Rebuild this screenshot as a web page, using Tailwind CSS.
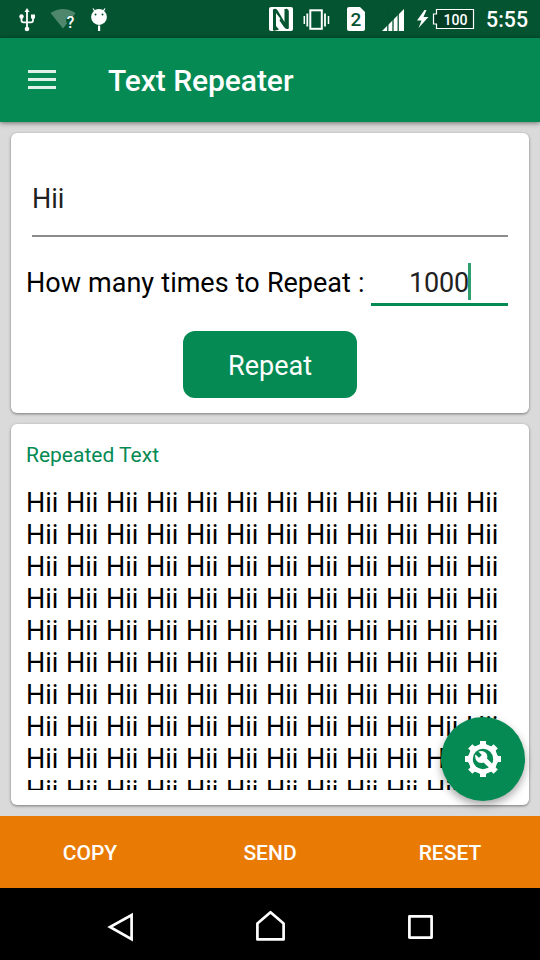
<!DOCTYPE html>
<html lang="en">
<head>
<meta charset="utf-8">
<title>Text Repeater</title>
<script src="https://cdn.jsdelivr.net/npm/@tailwindcss/browser@4"></script>
</head>
<body class="w-[540px] h-[960px] overflow-hidden bg-[#dadada] font-[Roboto,sans-serif] text-black flex flex-col">
<div class="h-[38px] shrink-0 bg-[#045331] text-white">
  <svg width="540" height="38" viewBox="0 0 540 38" fill="none">
    <g stroke="#fff" stroke-width="1.8">
      <path d="M27 12V29M21.500 17v3.500q0 1.800 2 1.800h7.500q2 0 2-1.800V17"/>
    </g>
    <g fill="#fff">
      <path d="M27 8l2.500 4h-5z"/><circle cx="27" cy="29" r="2.300"/><circle cx="21.500" cy="16.500" r="2.200"/><rect x="31" y="14.500" width="4" height="4"/>
    </g>
    <path d="M50.500 13Q63 5 75.500 13L73 16.500Q67 14 66 20L67 23.500L63 28.500Z" fill="#4f876d"/>
    <text x="66.500" y="27.500" font-size="16" font-weight="500" fill="#fff">?</text>
    <g fill="#fff">
      <circle cx="99" cy="17" r="7.900"/><rect x="98" y="25.500" width="2.200" height="5.500"/>
    </g>
    <path d="M93 8.500l2 3M105 8.500l-2 3" stroke="#fff" stroke-width="1.300"/>
    <circle cx="95.500" cy="14.500" r="1" fill="#045331"/><circle cx="102.500" cy="14.500" r="1" fill="#045331"/>
    <rect x="269" y="7" width="24" height="24" rx="2" fill="#fff"/>
    <path d="M273 30.500V9.500Q276 7.500 278 11L284.500 22V9H286.500V26.500L276 13V26L279 29.500Q276 31 273 30.500Z" fill="#045331"/>
    <path d="M286 8.500Q288.500 9 288.800 11V28.500Q286 30 284 27L279.500 20.500L280.500 18.500L286 25Z" fill="#045331"/>
    <rect x="310.300" y="10.300" width="11.500" height="18.500" stroke="#fff" stroke-width="2"/>
    <path d="M307.300 13.500v13M325 13.500v13" stroke="#fff" stroke-width="1.800"/><path d="M304.300 16v8M328.500 16v8" stroke="#fff" stroke-width="1.500"/>
    <path d="M349 7h11l5 5v17q0 2-2 2h-14q-2 0-2-2V9q0-2 2-2z" fill="#fff"/>
    <text x="356" y="26" text-anchor="middle" font-size="19" font-weight="500" fill="#045331">2</text>
    <path d="M382 31L404 9V31Z" fill="#fff"/>
    <path d="M387.800 8v23M393 8v23M398.200 8v23" stroke="#045331" stroke-width="1.300"/>
    <path d="M424.500 10L417 20.500h4.500L418.500 28L428.500 17h-5l3-7z" fill="#fff"/>
    <path d="M436.500 9.500h37v19h-37v-4.500h-3V14h3z" fill="#033d24" stroke="#fff" stroke-width="1.200"/>
    <text x="455.500" y="25" text-anchor="middle" font-size="15" font-weight="500" fill="#fff" textLength="24" lengthAdjust="spacingAndGlyphs">100</text>
    <text x="486" y="27" font-size="21.500" font-weight="500" fill="#fff" textLength="42" lengthAdjust="spacingAndGlyphs">5:55</text>
  </svg>
</div>
<header class="h-[84px] shrink-0 bg-[#058a54] shadow-[0_1px_5px_rgba(0,0,0,0.5)] flex items-center pl-7 text-white z-10">
  <svg width="28" height="22" viewBox="0 0 28 22" class="-mt-[2px]"><path d="M0 3.500h28M0 11.500h28M0 19.500h28" stroke="#fff" stroke-opacity=".88" stroke-width="3"/></svg>
  <h1 class="ml-[52px] mt-[2px] text-[30px] leading-9 font-medium w-[186px] whitespace-nowrap tracking-[-0.06px]">Text Repeater</h1>
</header>
<main class="flex-1 flex flex-col gap-[11px] px-[11px] pt-[11px] pb-[11px] min-h-0">
  <section class="h-[280px] shrink-0 bg-white rounded-[6px] shadow-[0_1px_3px_rgba(0,0,0,0.45)] flex flex-col items-center">
    <div class="w-[476px] h-[104px] pt-[50px] border-b-2 border-[#8d8d8d] text-[27px] leading-8 text-[#212121]">Hii</div>
    <div class="w-full h-[69px] flex pl-[15px] pr-[21px]">
      <div class="w-[345px] pt-[30px] text-[27px] leading-8 whitespace-nowrap [word-spacing:0.45px]">How many times to Repeat :</div>
      <div class="flex-1 border-b-3 border-[#058a54] flex justify-center items-start pt-[26px] text-[27px] leading-8 text-[#212121]">
        <span class="mt-1 tracking-[-0.2px]">1000</span><span class="w-[3px] h-[37px] bg-[#2f9f70] -mr-[1px] -ml-[1px]"></span>
      </div>
    </div>
    <button class="mt-[25px] w-[174px] h-[67px] rounded-[12px] bg-[#058a54] text-white text-[27px] leading-8 pt-[3px]">Repeat</button>
  </section>
  <section class="flex-1 min-h-0 bg-white rounded-[6px] shadow-[0_1px_3px_rgba(0,0,0,0.45)] pl-[15px] pt-[19px]">
    <h2 class="text-[21px] leading-[25px] text-[#058a54]">Repeated Text</h2>
    <div id="out" class="mt-[19px] h-[303px] w-[490px] overflow-hidden text-[27px] leading-8"></div>
  </section>
</main>
<nav class="h-[72px] shrink-0 bg-[#e97b04] text-white text-[21px] font-medium grid grid-cols-3 text-center items-center pt-[3px]">
  <span>COPY</span><span>SEND</span><span>RESET</span>
</nav>
<div class="h-[72px] shrink-0 bg-black">
  <svg width="540" height="72" viewBox="0 0 540 72" fill="none" stroke="#fff" stroke-width="2.700">
    <path d="M131.600 27V51.200L110 39Z"/><path d="M257.400 51.400V35.600L270.500 24.200L283.600 35.600V51.400Z" stroke-linejoin="round"/><rect x="409.400" y="28.400" width="22.200" height="21.200" stroke-linejoin="round"/>
  </svg>
</div>
<button class="absolute left-[441px] top-[717px] size-[84px] rounded-full bg-[#058a54] shadow-[0_4px_8px_rgba(0,0,0,0.35)] flex items-center justify-center z-20" aria-label="Settings">
  <svg width="36" height="36" viewBox="-18 -18 36 36">
    <g fill="#fff">
      <circle r="14.800"/>
      <g id="teeth"><path d="M-5-13.500L-3-15V-18H3V-15L5-13.500ZM-5 13.500L-3 15V18H3V15L5 13.500ZM-13.500-5L-15-3H-18V3H-15L-13.500 5ZM13.500-5L15-3H18V3H15L13.500 5Z"/></g>
      <use href="#teeth" transform="rotate(45)"/>
    </g>
    <circle r="10.200" fill="#058a54"/>
    <path d="M-7.500-4.500L-4-1.200L-1.200-4L-4.700-7.500Q0-9 3-6Q5-3.500 4-.5L11.500 7L8 10.500L.5 3.500Q-3.500 5-6.300 2Q-8.500-1-7.500-4.500Z" fill="#fff"/>
  </svg>
</button>
<script>
const row = '<div class="flex">' + '<span class="w-10">Hii</span>'.repeat(12) + '</div>';
document.getElementById('out').innerHTML = row.repeat(10);
</script>
</body>
</html>
